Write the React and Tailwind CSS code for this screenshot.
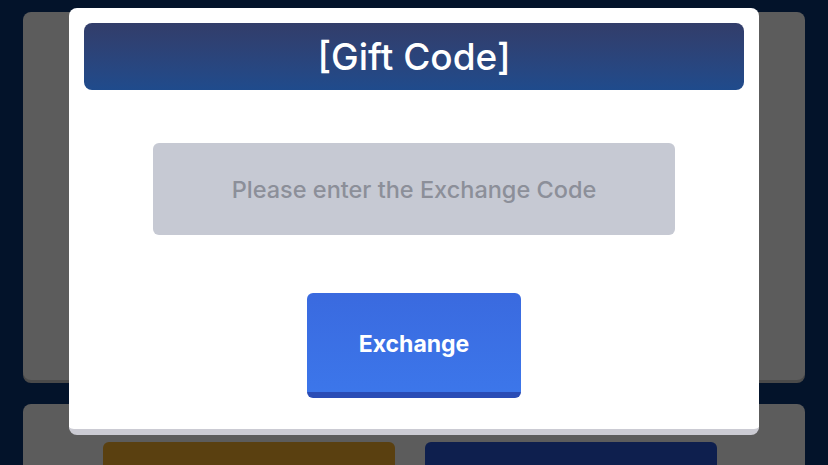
export default function App() {
  return (
    <div className="relative h-[465px] w-[828px] overflow-hidden bg-[#03132a] font-['Inter',sans-serif]">
      {/* background panels */}
      <div className="flex flex-col gap-6 px-[23px] pt-3">
        <div className="h-[368px] rounded-lg bg-[#5c5c5c] shadow-[0_3px_0_#4a4a4a]" />
        <div className="flex h-[80px] gap-[30px] rounded-lg bg-[#5c5c5c] pl-[80px] pt-[38px]">
          <div className="h-[60px] w-[292px] rounded-md bg-[#5a4010]" />
          <div className="h-[60px] w-[292px] rounded-md bg-[#0e1f4e]" />
        </div>
      </div>

      {/* gift code dialog */}
      <div className="absolute left-[69px] top-2 flex h-[427px] w-[690px] flex-col items-center rounded-lg border-b-[6px] border-[#cbcbd3] bg-white px-[15px] pt-[15px]">
        <div className="flex h-[67px] w-full items-center justify-center rounded-lg bg-gradient-to-b from-[#323d6a] to-[#1f4b8c]">
          <h1 className="text-[37px] font-medium leading-none text-white">[Gift Code]</h1>
        </div>
        <input
          className="mt-[53px] h-[92px] w-[522px] rounded-md bg-[#c6c9d3] text-center text-[23.5px] font-medium text-[#8c8f99] outline-none placeholder:text-[#8c8f99]"
          placeholder="Please enter the Exchange Code"
        />
        <button className="mt-[58px] h-[105px] w-[214px] rounded-md border-b-[6px] border-[#2a4cb5] bg-gradient-to-b from-[#3a6adf] to-[#3c76ea] pt-1 text-[23px] font-bold text-white">
          Exchange
        </button>
      </div>
    </div>
  );
}
